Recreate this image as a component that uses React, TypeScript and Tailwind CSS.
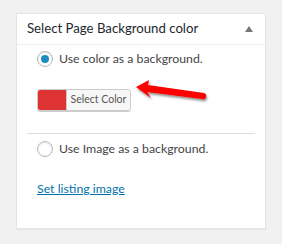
export default function App() {
    return (
        <div
            className="w-[282px] h-[244px] bg-[#f1f1f1] pt-[13px] pl-[16px]"
            style={{ fontFamily: 'Lato, "Noto Sans", sans-serif' }}
        >
            <div className="relative w-[250px] h-[216px] bg-white border border-[#e5e5e5] shadow-[0_1px_1px_rgba(0,0,0,0.04)]">
                <div className="flex items-center justify-between h-[31px] px-[10px] border-b border-[#eeeeee]">
                    <span className="text-[13.2px] text-[#23282d] leading-none">
                        Select Page Background color
                    </span>
                    <span className="w-0 h-0 border-l-[4px] border-r-[4px] border-b-[6px] border-l-transparent border-r-transparent border-b-[#72777c] mr-[2px]" />
                </div>

                <div className="px-[10px]">
                    <label className="flex items-center gap-[6px] pl-[10px] pt-[3px] h-[25px]">
                        <span className="w-[16px] h-[16px] rounded-full border border-[#b4b9be] flex items-center justify-center shadow-[inset_0_1px_2px_rgba(0,0,0,0.1)]">
                            <span className="w-[8px] h-[8px] rounded-full bg-[#1e8cbe]" />
                        </span>
                        <span className="text-[12.3px] text-[#444]">Use color as a background.</span>
                    </label>

                    <div className="pl-[10px] pt-[19px] pb-[22px]">
                        <div className="flex w-[94px] h-[22px] rounded-[3px] border border-[#cccccc] overflow-hidden shadow-[0_1px_0_#ccc]">
                            <span className="w-[28px] bg-[#dd3333]" />
                            <span className="flex-1 flex items-center justify-center bg-[#f7f7f7] border-l border-[#cccccc] text-[10.5px] text-[#555]">
                                Select Color
                            </span>
                        </div>
                    </div>

                    <div className="border-t border-[#dddddd]" />

                    <label className="flex items-center gap-[6px] pl-[10px] pt-[7px] h-[23px]">
                        <span className="w-[16px] h-[16px] rounded-full border border-[#b4b9be] shadow-[inset_0_1px_2px_rgba(0,0,0,0.1)]" />
                        <span className="text-[12.3px] text-[#444]">Use Image as a background.</span>
                    </label>

                    <div className="pl-[10px] pt-[18px]">
                        <a className="text-[12.3px] text-[#0073aa] underline">Set listing image</a>
                    </div>
                </div>

                <svg
                    className="absolute left-[116px] top-[64px]"
                    width="80"
                    height="30"
                    viewBox="0 0 80 30"
                >
                    <defs>
                        <filter id="sh" x="-20%" y="-30%" width="140%" height="160%">
                            <feDropShadow dx="1" dy="2" stdDeviation="1.2" floodColor="#000" floodOpacity="0.45" />
                        </filter>
                    </defs>
                    <g filter="url(#sh)">
                        <path
                            d="M3 9 L16 2 L15 7 L71 15 Q74 16 73 19 Q72 22 69 21 L14 14 L18 20 Z"
                            fill="#ff0000"
                        />
                    </g>
                </svg>
            </div>
        </div>
    );
}
